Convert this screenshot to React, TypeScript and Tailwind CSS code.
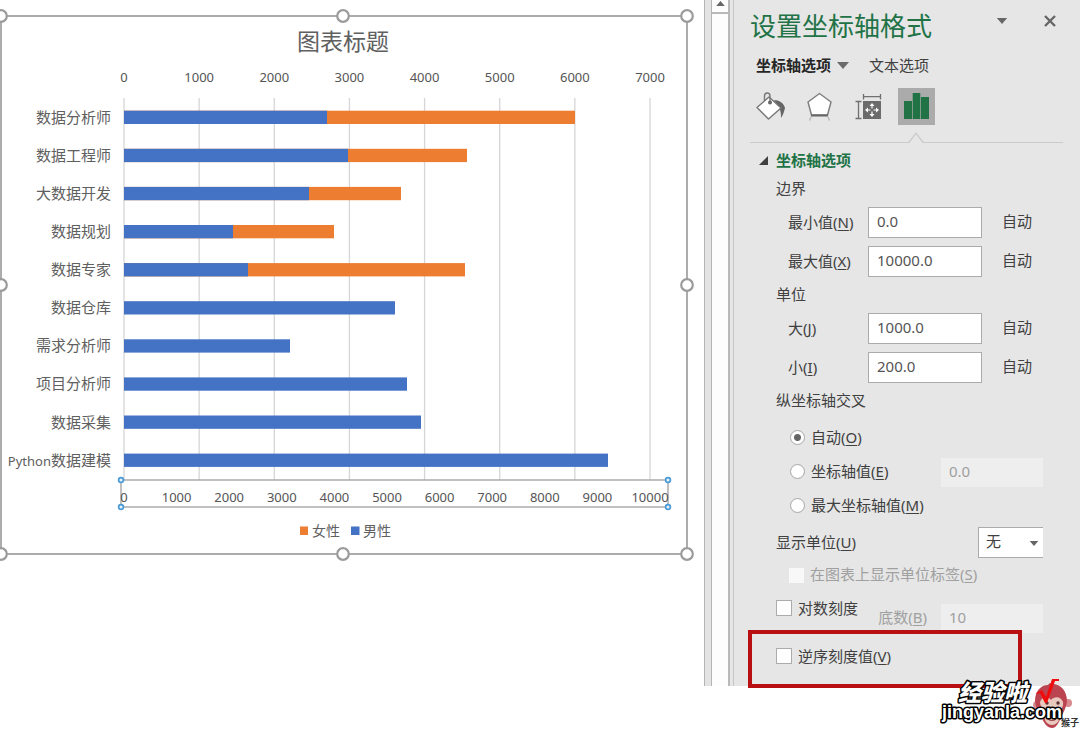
import { useId, useState } from "react";
import type { ReactNode } from "react";

interface Bar {
  latin?: string;
  label: string;
  male: number;
  female: number;
}

// Lengths are measured along the plot area, female is the full length of the orange bar
const BARS: Bar[] = [
  { label: "数据分析师", male: 203, female: 451 },
  { label: "数据工程师", male: 224, female: 343 },
  { label: "大数据开发", male: 185, female: 277 },
  { label: "数据规划", male: 109, female: 210 },
  { label: "数据专家", male: 124, female: 341 },
  { label: "数据仓库", male: 271, female: 0 },
  { label: "需求分析师", male: 166, female: 0 },
  { label: "项目分析师", male: 283, female: 0 },
  { label: "数据采集", male: 297, female: 0 },
  { latin: "Python", label: "数据建模", male: 484, female: 0 },
];

const PLOT_LEFT = 124;
const PLOT_WIDTH = 526;

const TOP_TICKS = [0, 1000, 2000, 3000, 4000, 5000, 6000, 7000];
const BOTTOM_TICKS = [0, 1000, 2000, 3000, 4000, 5000, 6000, 7000, 8000, 9000, 10000];

const FRAME_HANDLES = [
  [1, 16], [343, 16], [687, 16],
  [1, 285], [687, 285],
  [1, 554], [343, 554], [687, 554],
];

const AXIS_HANDLES = [[121, 480], [668, 480], [121, 507], [668, 507]];

function Chart() {
  return (
    <svg viewBox="0 0 704 570" className="block h-auto w-full" role="img" aria-label="图表标题">
      <rect x={1} y={16} width={686} height={538} fill="#fff" stroke="#acacac" strokeWidth={2} />

      <text x={343} y={50} textAnchor="middle" className="fill-[#606060] text-[23px]">图表标题</text>

      {TOP_TICKS.map((tick) => {
        const x = PLOT_LEFT + (tick / 7000) * PLOT_WIDTH;
        return (
          <g key={tick}>
            <line x1={x} x2={x} y1={98} y2={480} stroke="#d6d6d8" strokeWidth={1.3} />
            <text x={x} y={82} textAnchor="middle" className="fill-[#555] text-[13px]">{tick}</text>
          </g>
        );
      })}

      {BARS.map((bar, i) => {
        const y = 110.7 + i * 38.1;
        return (
          <g key={bar.label}>
            <text x={111} y={y + 12} textAnchor="end" className="fill-[#606060] text-[15px]">
              {bar.latin && <tspan className="text-[13px]">{bar.latin}</tspan>}
              {bar.label}
            </text>
            <rect x={PLOT_LEFT} y={y} width={bar.female} height={13.3} fill="#ed7d31" />
            <rect x={PLOT_LEFT} y={y} width={bar.male} height={13.3} fill="#4472c4" />
          </g>
        );
      })}

      {/* selected axis */}
      <rect x={121} y={480} width={547} height={27} fill="none" stroke="#a6a6a6" strokeWidth={1.4} />
      {BOTTOM_TICKS.map((tick) => (
        <text
          key={tick}
          x={PLOT_LEFT + (tick / 10000) * PLOT_WIDTH}
          y={502}
          textAnchor="middle"
          className="fill-[#555] text-[13px]"
        >
          {tick}
        </text>
      ))}
      {AXIS_HANDLES.map(([x, y]) => (
        <circle key={`${x}-${y}`} cx={x} cy={y} r={2.4} fill="#e6f2fb" stroke="#4a9bd6" strokeWidth={1.7} />
      ))}

      {/* legend */}
      <rect x={300} y={526.5} width={8} height={8.5} fill="#ed7d31" />
      <text x={312} y={536} className="fill-[#606060] text-[14px]">女性</text>
      <rect x={351} y={526.5} width={8.5} height={8.5} fill="#4472c4" />
      <text x={363} y={536} className="fill-[#606060] text-[14px]">男性</text>

      {FRAME_HANDLES.map(([x, y]) => (
        <circle key={`${x}-${y}`} cx={x} cy={y} r={5.8} fill="#fff" stroke="#9b9b9b" strokeWidth={2.2} />
      ))}
    </svg>
  );
}

function FillIcon() {
  return (
    <svg className="h-[30px] w-[30px]" viewBox="0 0 30 30" fill="none">
      <path d="M18 8c5 0 10 3 11 8-1 4-2 7-4 10 0-3 0-5-1-8z" fill="#666" />
      <path d="M13 5 25 16 12.500 27 1 15.500z" fill="#fff" stroke="#777" strokeWidth={1.4} strokeLinejoin="round" />
      <path d="M8.500 9V4c0-4 5.500-4 5.500 0v6" stroke="#777" strokeWidth={1.4} />
      <circle cx={14} cy={10.5} r={2} fill="#666" />
    </svg>
  );
}

function EffectsIcon() {
  return (
    <svg className="h-[30px] w-[28px]" viewBox="0 0 28 30" fill="none">
      <path d="M13.5 1.500 25 10 21.500 23H5.500L2 10z" fill="#fff" stroke="#808080" strokeWidth={1.5} strokeLinejoin="round" />
      <path d="M5 23.500h17" stroke="#666" strokeWidth={2} />
      <path d="M5 25l-1.500 3.500M22 25l1.500 3.500" stroke="#b5b5b5" strokeWidth={1.3} />
    </svg>
  );
}

function SizeIcon() {
  return (
    <svg className="h-[30px] w-[30px]" viewBox="0 0 30 30" fill="none">
      <path d="M1.500 9.500h6M4.500 9.500v17M1.500 26.500h6M9.500 2v5.500M9.500 4.700h17M26.500 2v5.500" stroke="#707070" strokeWidth={1.3} />
      <rect x={9} y={9} width={18} height={18} fill="#6b6b6b" />
      <path
        d="M18 11l2.500 3h-5zM18 25l2.500-3h-5zM11 18l3-2.500v5zM25 18l-3-2.500v5zM17.400 14h1.200v2.500h-1.200zM17.400 19.500h1.200V22h-1.200zM14 17.400h2.500v1.200H14zM19.500 17.400H22v1.200h-2.500z"
        fill="#fff"
      />
    </svg>
  );
}

function AxisIcon() {
  return (
    <svg className="h-[37px] w-[37px]" viewBox="0 0 37 37" fill="#217346">
      <rect x={6} y={13} width={8} height={18} />
      <rect x={14.7} y={5} width={7.6} height={26} />
      <rect x={23} y={9} width={8} height={22} />
    </svg>
  );
}

function Caret({ className }: { className: string }) {
  return (
    <svg className={className} viewBox="0 0 12 7" fill="currentColor">
      <path d="M0 0h12L6 7z" />
    </svg>
  );
}

function Key({ children }: { children: string }) {
  return (
    <>
      (<span className="underline underline-offset-2">{children}</span>)
    </>
  );
}

function ValueRow({ label, hotkey, initial }: { label: string; hotkey: string; initial: string }) {
  const id = useId();
  const [value, setValue] = useState(initial);
  return (
    <div className="flex items-center pl-3">
      <label htmlFor={id} className="w-20 pb-[2px]">
        {label}
        <Key>{hotkey}</Key>
      </label>
      <input
        id={id}
        value={value}
        onChange={(e) => setValue(e.target.value)}
        className="h-[31px] w-[114px] border border-[#ababab] bg-white px-2 pb-[3px] text-[#555]"
      />
      <button className="ml-5 pb-[3px]">自动</button>
    </div>
  );
}

function RadioRow({ id, checked, onSelect, children }: { id: string; checked: boolean; onSelect: () => void; children: ReactNode }) {
  return (
    <label htmlFor={id} className="flex items-center gap-[6px] pb-[2px]">
      <input
        id={id}
        type="radio"
        name="cross"
        checked={checked}
        onChange={onSelect}
        className="h-[15px] w-[15px] appearance-none rounded-full border border-[#ababab] bg-white bg-clip-padding checked:bg-[radial-gradient(circle,#666_0_3px,#fff_4px)]"
      />
      <span>{children}</span>
    </label>
  );
}

const CHECKBOX = "h-4 w-4 appearance-none border border-[#ababab] bg-white checked:bg-[#217346]";

function FormatPanel() {
  const [cross, setCross] = useState("auto");
  return (
    <aside className="flex w-[352px] shrink-0 border-l-2 border-[#b9b9b9] bg-[#e6e6e6] pl-[3px]">
      <div className="min-w-0 flex-1 border-l border-[#c6c6c6] pb-4 pl-4 text-[15px] leading-5 text-[#404040]">
        <header className="flex h-[52px] items-center pr-6">
          <h1 className="flex-1 text-[26px] leading-8 text-[#217346]">设置坐标轴格式</h1>
          <button aria-label="任务窗格选项" className="mb-[10px] mr-9 text-[#666]">
            <Caret className="h-[6px] w-[12px]" />
          </button>
          <button aria-label="关闭" className="mb-[10px] text-[#666]">
            <svg className="h-3 w-3" viewBox="0 0 12 12" fill="none" stroke="currentColor" strokeWidth={2.4}>
              <path d="M1 1l10 10M11 1L1 11" />
            </svg>
          </button>
        </header>

        <nav className="flex h-[26px] items-center pl-[6px]">
          <button className="flex items-center gap-[6px] font-bold text-[#262626]">
            坐标轴选项
            <Caret className="h-[7px] w-[12px] text-[#6b6b6b]" />
          </button>
          <button className="ml-5">文本选项</button>
        </nav>

        <div className="flex items-center pl-[6px] pt-[10px]">
          <button aria-label="填充与线条"><FillIcon /></button>
          <button aria-label="效果" className="ml-5"><EffectsIcon /></button>
          <button aria-label="大小与属性" className="ml-5"><SizeIcon /></button>
          <button aria-label="坐标轴选项" className="ml-[14px] bg-[#ababab]"><AxisIcon /></button>
        </div>

        <div className="mr-[17px] mt-[6px] flex items-end">
          <div className="w-[158px] border-b border-[#cbcbcb]" />
          <svg className="h-3 w-4" viewBox="0 0 16 12" fill="none" stroke="#cbcbcb" strokeWidth={1.3}>
            <path d="M0 11.500h1L8 2l7 9.500h1" />
          </svg>
          <div className="flex-1 border-b border-[#cbcbcb]" />
        </div>

        <section className="mt-[3px]">
          <h2>
            <button className="flex h-7 items-center gap-2 pl-[9px] font-bold text-[#217346]">
              <svg className="h-[9px] w-[9px]" viewBox="0 0 9 9" fill="#404040">
                <path d="M9 0v9H0z" />
              </svg>
              坐标轴选项
            </button>
          </h2>

          <div className="pl-[26px] pr-[37px]">
            <h3 className="flex h-7 items-center">边界</h3>
            <div className="mb-[3px] mt-[5px] flex flex-col gap-2">
              <ValueRow label="最小值" hotkey="N" initial="0.0" />
              <ValueRow label="最大值" hotkey="X" initial="10000.0" />
            </div>

            <h3 className="flex h-7 items-center">单位</h3>
            <div className="mb-[3px] mt-[5px] flex flex-col gap-2">
              <ValueRow label="大" hotkey="J" initial="1000.0" />
              <ValueRow label="小" hotkey="I" initial="200.0" />
            </div>

            <h3 className="flex h-7 items-center">纵坐标轴交叉</h3>
            <div className="mt-[7px] pl-[14px]">
              <div className="flex h-[34px] items-center">
                <RadioRow id="cross-auto" checked={cross === "auto"} onSelect={() => setCross("auto")}>
                  自动<Key>O</Key>
                </RadioRow>
              </div>
              <div className="flex h-[34px] items-center justify-between">
                <RadioRow id="cross-value" checked={cross === "value"} onSelect={() => setCross("value")}>
                  坐标轴值<Key>E</Key>
                </RadioRow>
                <input
                  aria-label="坐标轴值"
                  disabled
                  defaultValue="0.0"
                  className="h-[29px] w-[102px] bg-[#eeeeee] px-2 pb-[3px] text-[#a0a0a0]"
                />
              </div>
              <div className="flex h-[34px] items-center">
                <RadioRow id="cross-max" checked={cross === "max"} onSelect={() => setCross("max")}>
                  最大坐标轴值<Key>M</Key>
                </RadioRow>
              </div>
            </div>

            <div className="mt-1 flex items-center justify-between">
              <label htmlFor="display-unit" className="pb-[2px]">
                显示单位<Key>U</Key>
              </label>
              <div className="relative">
                <select
                  id="display-unit"
                  className="block h-[31px] w-[65px] appearance-none border border-r-0 border-[#ababab] bg-white px-[7px] pb-[3px]"
                >
                  <option>无</option>
                </select>
                <Caret className="pointer-events-none absolute right-1 top-[14px] h-[5px] w-[10px] text-[#666]" />
              </div>
            </div>

            <label className="mt-[3px] flex h-7 items-center gap-[6px] pl-[13px] text-[#a0a0a0]">
              <input type="checkbox" disabled className="h-[15px] w-[15px] appearance-none bg-[#f8f8f8]" />
              <span className="pb-[2px]">
                在图表上显示单位标签<Key>S</Key>
              </span>
            </label>

            <div className="mt-[5px] flex h-[39px] justify-between">
              <label className="flex h-7 items-center gap-[6px]">
                <input type="checkbox" className={CHECKBOX} />
                对数刻度
              </label>
              <div className="flex items-center gap-[14px] self-end text-[#a0a0a0]">
                <label htmlFor="log-base" className="pb-[3px]">
                  底数<Key>B</Key>
                </label>
                <input
                  id="log-base"
                  disabled
                  defaultValue="10"
                  className="h-[29px] w-[102px] bg-[#eeeeee] px-2 pb-[3px]"
                />
              </div>
            </div>

            <div className="relative mt-[9px]">
              <label className="flex h-7 items-center gap-[6px]">
                <input type="checkbox" className={CHECKBOX} />
                <span>
                  逆序刻度值<Key>V</Key>
                </span>
              </label>
              <div className="pointer-events-none absolute -bottom-[18px] -left-7 -top-3 right-[21px] border-4 border-[#b80f12]" />
            </div>
          </div>
        </section>
      </div>
    </aside>
  );
}

function Watermark() {
  return (
    <svg className="absolute bottom-0 right-0 h-[60px] w-[150px]" viewBox="0 0 150 60">
      {/* monkey mascot */}
      <circle cx={107} cy={35} r={4} fill="#d98a8e" />
      <circle cx={138} cy={33} r={4} fill="#d98a8e" />
      <path d="M105 31c0-10 6-16 13-16 1-2 3-2 4-1 9 0 15 7 15 17-1 8-4 12-6 16-2 6-5 11-9 11s-8-4-10-10c-2-4-6-9-7-17z" fill="#bb4451" />
      <path d="M110 32c2-6 8-6 11-2 3-4 10-4 12 2 1 5-3 8-4 11 2 7-2 12-7 12s-9-5-7-12c-1-3-5-6-5-11z" fill="#e9c9bd" />
      <circle cx={117} cy={33} r={1.7} fill="#5a3034" />
      <circle cx={128} cy={33} r={1.7} fill="#5a3034" />
      <path d="M118 49q4 3 8 0" fill="none" stroke="#a5484f" strokeWidth={1.2} />
      <text x={131} y={56} className="fill-[#333] text-[9px] font-bold">猴子</text>

      <g stroke="#000" strokeWidth={3} strokeLinejoin="round" paintOrder="stroke" fill="#fff">
        <text x={28} y={31} className="text-[23px] font-black italic">经验啦</text>
        <text x={12} y={48} className="font-['Liberation_Sans',sans-serif] text-[18px] font-bold">jingyanla.com</text>
      </g>
      <path d="M106 23l6-3 4 7 6-18h7v2h-4l-8 22h-2l-5-10-3 1z" fill="#f00c0c" />
    </svg>
  );
}

export default function App() {
  return (
    <div className="relative min-h-screen overflow-hidden bg-white font-['Noto_Sans','Noto_Sans_CJK_SC',sans-serif]">
      <div className="flex">
        <main className="min-w-0 flex-1">
          <Chart />
        </main>
        <div className="w-2 shrink-0 border-x border-[#b5b5b5] bg-[#e3e3e3]" />
        <div className="w-4 shrink-0 bg-[#fdfdfd]">
          <button aria-label="向上滚动" className="flex h-[14px] w-full justify-center border-b-2 border-[#b9b9b9] pt-[1px] text-[#666]">
            <Caret className="h-[5px] w-[9px] rotate-180" />
          </button>
        </div>
        <FormatPanel />
      </div>
      <Watermark />
    </div>
  );
}
